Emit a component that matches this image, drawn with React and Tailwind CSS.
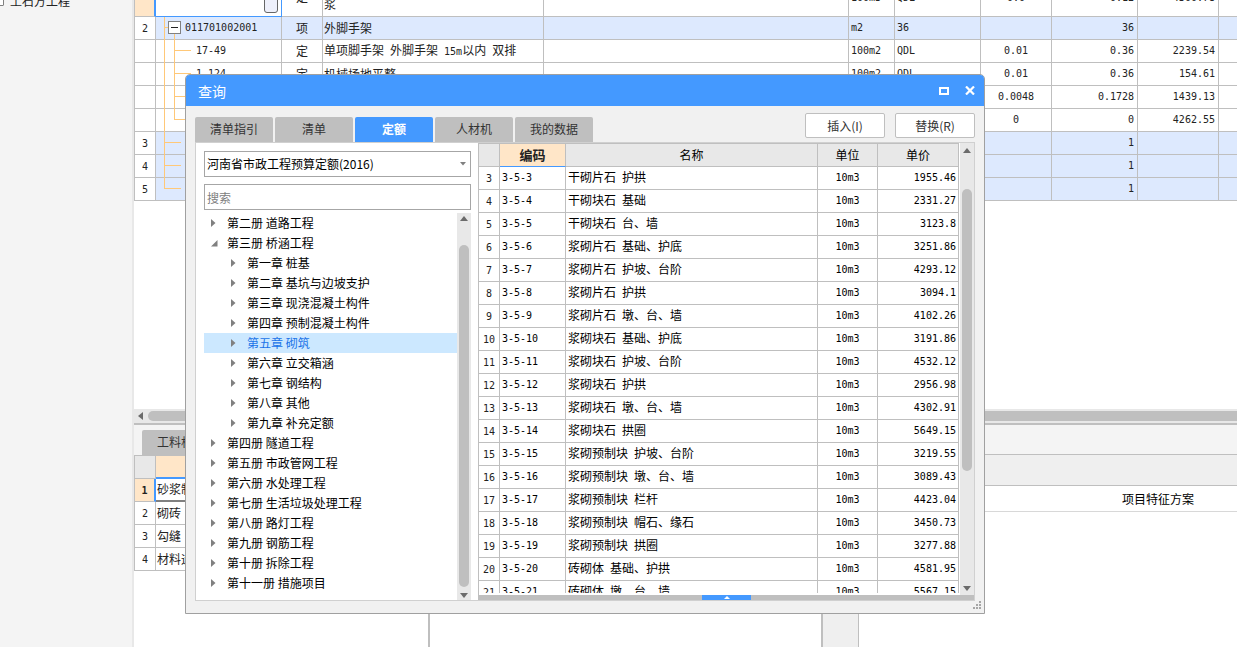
import React from "react";

const MONO = "font-['DejaVu_Sans_Mono','Noto_Sans_CJK_SC',monospace] text-[10px]";

// Latin runs are set in a half-width face, CJK runs keep the full 12px square.
function Mixed({ children }) {
  return String(children)
    .split(/([\x20-\x7e]+)/)
    .filter(Boolean)
    .map((part, i) =>
      /^[\x20-\x7e]/.test(part) ? (
        <span key={i} className={`${MONO} whitespace-pre`}>
          {part}
        </span>
      ) : (
        <span key={i}>{part}</span>
      )
    );
}

const line = "border-[#bfbfbf]";

const budgetRows = [
  { no: "2", code: "011701002001", kind: "项", name: "外脚手架", unit: "m2", expr: "36", rate: "", qty: "36", price: "", node: "root", tint: true },
  { no: "", code: "17-49", kind: "定", name: "单项脚手架 外脚手架 15m以内 双排", unit: "100m2", expr: "QDL", rate: "0.01", qty: "0.36", price: "2239.54", node: "child" },
  { no: "", code: "1-124", kind: "定", name: "机械场地平整", unit: "100m2", expr: "QDL", rate: "0.01", qty: "0.36", price: "154.61", node: "child" },
  { no: "", code: "", kind: "", name: "", unit: "", expr: "", rate: "0.0048", qty: "0.1728", price: "1439.13", node: "child" },
  { no: "", code: "", kind: "", name: "", unit: "", expr: "", rate: "0", qty: "0", price: "4262.55", node: "lastChild" },
  { no: "3", code: "", kind: "", name: "", unit: "", expr: "", rate: "", qty: "1", price: "", node: "leaf", tint: true },
  { no: "4", code: "", kind: "", name: "", unit: "", expr: "", rate: "", qty: "1", price: "", node: "leaf", tint: true },
  { no: "5", code: "", kind: "", name: "", unit: "", expr: "", rate: "", qty: "1", price: "", node: "lastLeaf", tint: true },
];

const nodePaths = {
  root: "M8.5 0V23M8 10.5H12M18.5 17V23",
  child: "M8.5 0V23M18.5 0V23M18 10.5H35",
  lastChild: "M8.5 0V23M18.5 0V11M18 10.5H35",
  leaf: "M8.5 0V23M8 10.5H25",
  lastLeaf: "M8.5 0V11M8 10.5H25",
};

function Branch({ node }) {
  return (
    <svg width="40" height="23" className="-mb-px block shrink-0" aria-hidden="true">
      <path d={nodePaths[node]} stroke="#ffc878" fill="none" />
      {node === "root" && (
        <>
          <rect x="12.5" y="4.5" width="12" height="12" fill="#fff" stroke="#808080" />
          <path d="M15 10.5H22" stroke="#222" />
        </>
      )}
    </svg>
  );
}

function BudgetGrid() {
  const base = `border-b ${line} p-0 h-[23px] overflow-hidden whitespace-nowrap`;
  const plain = `${base} border-r`;
  const text = `${plain} pb-[2px]`;
  const mono = `${plain} pb-[4px]`;
  return (
    <div className="h-[409px] shrink-0 overflow-hidden">
      <table className="-mt-[23px] w-full min-w-[1103px] table-fixed border-separate border-spacing-0 leading-[15px] text-[#222]">
        <colgroup>
          <col className="w-[22px]" />
          <col className="w-[126px]" />
          <col className="w-[41px]" />
          <col className="w-[221px]" />
          <col className="w-[305px]" />
          <col className="w-[46px]" />
          <col className="w-[86px]" />
          <col className="w-[71px]" />
          <col className="w-[86px]" />
          <col className="w-[81px]" />
          <col />
        </colgroup>
        <tbody>
          <tr>
            <td className="h-[40px] border-r-2 border-b border-l border-r-[#4499ff] border-b-[#bfbfbf] border-l-[#bfbfbf] bg-[#ffe6c8] p-0" />
            <td className="border-r border-b border-[#4499ff] bg-white p-0 pr-[3px]">
              <button type="button" aria-label="选择" className="ml-auto block h-[32px] w-[14px] rounded-[3px] border border-[#666] bg-[#eef0fb]" />
            </td>
            <td className={`${plain} text-center`}>定</td>
            <td className={`${text} pl-px`}>
              砌体抹灰
              <br />
              浆
            </td>
            <td className={plain} />
            <td className={`${plain} pl-[2px]`}><Mixed>100m3</Mixed></td>
            <td className={`${plain} pl-[2px]`}><Mixed>QDL</Mixed></td>
            <td className={`${plain} text-center`}><Mixed>0.0</Mixed></td>
            <td className={`${plain} pr-[3px] text-right`}><Mixed>0.12</Mixed></td>
            <td className={`${plain} pr-[3px] text-right`}><Mixed>4300.78</Mixed></td>
            <td className={base} />
          </tr>
          {budgetRows.map((r, i) => (
            <tr key={i} className={r.tint ? "bg-[#dde9fe]" : "bg-white"}>
              <td className={`${text} border-l bg-white text-center`}><Mixed>{r.no}</Mixed></td>
              <td className={`${plain} overflow-visible`}>
                <div className="flex h-[22px] items-center">
                  <Branch node={r.node} />
                  <span className={r.node === "root" ? "-ml-[11px] pb-[3px]" : "pb-[3px]"}><Mixed>{r.code}</Mixed></span>
                </div>
              </td>
              <td className={`${text} text-center`}>{r.kind}</td>
              <td className={`${text} pl-px`}><Mixed>{r.name}</Mixed></td>
              <td className={plain} />
              <td className={`${mono} pl-[2px]`}><Mixed>{r.unit}</Mixed></td>
              <td className={`${mono} pl-[2px]`}><Mixed>{r.expr}</Mixed></td>
              <td className={`${mono} text-center`}><Mixed>{r.rate}</Mixed></td>
              <td className={`${mono} pr-[3px] text-right`}><Mixed>{r.qty}</Mixed></td>
              <td className={`${mono} pr-[3px] text-right`}><Mixed>{r.price}</Mixed></td>
              <td className={base} />
            </tr>
          ))}
        </tbody>
      </table>
    </div>
  );
}

const workItems = ["砂浆制作", "砌砖", "勾缝", "材料运输"];

function LowerPanes() {
  return (
    <div className="flex min-h-0 flex-1 bg-white">
      <section className="flex w-[296px] shrink-0 flex-col border-r-2 border-[#bfbfbf]">
        <div className="flex h-[30px] items-end bg-[#f4f4f4] pl-2">
          <button type="button" className="h-[25px] rounded-t-[2px] bg-[#bfbfbf] px-[15px] pb-[2px] text-[#333]">工料机显示</button>
        </div>
        <table className={`w-full table-fixed border-separate border-spacing-0 border-t ${line} leading-[15px] text-[#222]`}>
          <colgroup>
            <col className="w-[22px]" />
            <col />
          </colgroup>
          <thead>
            <tr>
              <th className={`h-[23px] border-x border-b ${line} bg-[#e8e8e8] p-0`} />
              <th className="border-b-2 border-[#4499ff] bg-[#ffe6c8] p-0" />
            </tr>
          </thead>
          <tbody>
            {workItems.map((w, i) => (
              <tr key={w}>
                <td className={i === 0 ? "h-[23px] border-r-2 border-b border-l border-[#bfbfbf] border-r-[#4499ff] bg-[#ffe6c8] p-0 pb-[2px] text-center font-bold" : `h-[23px] border-x border-b ${line} p-0 pb-[2px] text-center`}>
                  <Mixed>{i + 1}</Mixed>
                </td>
                <td className={i === 0 ? "border-b-2 border-[#808080] p-0 pb-[2px] pl-px" : `border-b ${line} p-0 pb-[2px] pl-px`}>{w}</td>
              </tr>
            ))}
          </tbody>
        </table>
      </section>
      <section className="min-w-[391px] shrink-0 bg-white" />
      <div className={`w-[38px] shrink-0 border-r border-l-2 ${line} bg-[#efefef]`} />
      <section className="min-w-0 flex-1 overflow-hidden">
        <div className={`h-[30px] border-b ${line} bg-[#f4f4f4]`} />
        <div className={`h-[31px] border-b ${line} bg-[#efefef]`} />
        <div className="flex h-[26px] items-center border-b border-[#d8d8d8]">
          <span className="w-[357px] shrink-0 pl-[263px] whitespace-nowrap text-black">项目特征方案</span>
        </div>
      </section>
    </div>
  );
}

const tree = [
  ["第二册 道路工程", 1],
  ["第三册 桥涵工程", 1, "open"],
  ["第一章 桩基", 2],
  ["第二章 基坑与边坡支护", 2],
  ["第三章 现浇混凝土构件", 2],
  ["第四章 预制混凝土构件", 2],
  ["第五章 砌筑", 2, "selected"],
  ["第六章 立交箱涵", 2],
  ["第七章 钢结构", 2],
  ["第八章 其他", 2],
  ["第九章 补充定额", 2],
  ["第四册 隧道工程", 1],
  ["第五册 市政管网工程", 1],
  ["第六册 水处理工程", 1],
  ["第七册 生活垃圾处理工程", 1],
  ["第八册 路灯工程", 1],
  ["第九册 钢筋工程", 1],
  ["第十册 拆除工程", 1],
  ["第十一册 措施项目", 1],
];

function TreeArrow({ open }) {
  return (
    <svg width="16" height="8" className="shrink-0" aria-hidden="true" fill="#808080">
      {open ? <path d="M0 7.500L6.500 1V7.500Z" /> : <path d="M0 0L4.500 4L0 8Z" />}
    </svg>
  );
}

function ScrollArrow({ down }) {
  return (
    <svg width="8" height="5" aria-hidden="true" fill="#6b6b6b" className="block">
      {down ? <path d="M0 0H8L4 5Z" /> : <path d="M0 5H8L4 0Z" />}
    </svg>
  );
}

const quotas = [
  ["3", "3-5-3", "干砌片石 护拱", "1955.46"],
  ["4", "3-5-4", "干砌块石 基础", "2331.27"],
  ["5", "3-5-5", "干砌块石 台、墙", "3123.8"],
  ["6", "3-5-6", "浆砌片石 基础、护底", "3251.86"],
  ["7", "3-5-7", "浆砌片石 护坡、台阶", "4293.12"],
  ["8", "3-5-8", "浆砌片石 护拱", "3094.1"],
  ["9", "3-5-9", "浆砌片石 墩、台、墙", "4102.26"],
  ["10", "3-5-10", "浆砌块石 基础、护底", "3191.86"],
  ["11", "3-5-11", "浆砌块石 护坡、台阶", "4532.12"],
  ["12", "3-5-12", "浆砌块石 护拱", "2956.98"],
  ["13", "3-5-13", "浆砌块石 墩、台、墙", "4302.91"],
  ["14", "3-5-14", "浆砌块石 拱圈", "5649.15"],
  ["15", "3-5-15", "浆砌预制块 护坡、台阶", "3219.55"],
  ["16", "3-5-16", "浆砌预制块 墩、台、墙", "3089.43"],
  ["17", "3-5-17", "浆砌预制块 栏杆", "4423.04"],
  ["18", "3-5-18", "浆砌预制块 帽石、缘石", "3450.73"],
  ["19", "3-5-19", "浆砌预制块 拱圈", "3277.88"],
  ["20", "3-5-20", "砖砌体 基础、护拱", "4581.95"],
  ["21", "3-5-21", "砖砌体 墩、台、墙", "5567.15"],
];

function QuotaTable() {
  const cell = `h-[23px] border-r border-b ${line} p-0 whitespace-nowrap overflow-hidden`;
  const text = `${cell} pb-[2px]`;
  const mono = `${cell} pb-[4px]`;
  const head = `${text} bg-[#e8e8e8] font-normal`;
  return (
    <div className={`h-[450px] overflow-hidden border-t ${line}`}>
      <table className="w-full table-fixed border-separate border-spacing-0 leading-[15px] text-black">
        <colgroup>
          <col className="w-[21px]" />
          <col className="w-[66px]" />
          <col />
          <col className="w-[60px]" />
          <col className="w-[81px]" />
        </colgroup>
        <thead>
          <tr>
            <th className={head} />
            <th className="h-[23px] border-r border-b border-r-[#bfbfbf] border-b-[#4499ff] bg-[#ffe6c8] p-0 pb-[2px] text-[13px] font-bold text-[#222]">编码</th>
            <th className={head}>名称</th>
            <th className={head}>单位</th>
            <th className={head}>单价</th>
          </tr>
        </thead>
        <tbody>
          {quotas.map(([no, code, name, price]) => (
            <tr key={no}>
              <td className={`${text} text-center text-[#222]`}><Mixed>{no}</Mixed></td>
              <td className={`${mono} pl-[2px]`}><Mixed>{code}</Mixed></td>
              <td className={`${text} pl-[2px]`}><Mixed>{name}</Mixed></td>
              <td className={`${mono} text-center`}><Mixed>10m3</Mixed></td>
              <td className={`${mono} pr-[2px] text-right`}><Mixed>{price}</Mixed></td>
            </tr>
          ))}
        </tbody>
      </table>
    </div>
  );
}

const tabs = ["清单指引", "清单", "定额", "人材机", "我的数据"];

function QueryDialog() {
  return (
    <div role="dialog" aria-labelledby="query-title" className="absolute top-[74px] left-[185px] flex h-[540px] w-[800px] flex-col overflow-hidden rounded-t-[5px] border border-[#a0a0a0] bg-[#f1f1f1]">
      <header className="flex h-[31px] shrink-0 items-center bg-[#4499ff] pr-[9px] pl-3 text-white">
        <h1 id="query-title" className="flex-1 text-[14px] leading-[20px]">查询</h1>
        <button type="button" aria-label="最大化" className="mr-4">
          <svg width="10" height="8" className="block"><path d="M1 1H9V7H1Z" fill="none" stroke="#fff" strokeWidth="2" /></svg>
        </button>
        <button type="button" aria-label="关闭">
          <svg width="10" height="9" className="block"><path d="M1 0.500L9 8.500M9 0.500L1 8.500" fill="none" stroke="#fff" strokeWidth="2.200" /></svg>
        </button>
      </header>
      <div className="flex h-[36px] shrink-0 items-end px-[9px]">
        <div role="tablist" className="flex flex-1 gap-[2px]">
          {tabs.map((t) => (
            <button
              key={t}
              type="button"
              role="tab"
              aria-selected={t === "定额"}
              className={t === "定额" ? "h-[25px] w-[78px] rounded-t-[2px] bg-[#4499ff] pb-[2px] font-bold text-white" : "h-[25px] w-[78px] rounded-t-[2px] bg-[#bfbfbf] pb-[2px] text-[#333]"}
            >
              {t}
            </button>
          ))}
        </div>
        <div className="flex gap-[10px] pb-1">
          <button type="button" className={`h-[25px] w-[80px] rounded-[2px] border ${line} bg-white text-[#333]`}>插入(I)</button>
          <button type="button" className={`h-[25px] w-[80px] rounded-[2px] border ${line} bg-white text-[#333]`}>替换(R)</button>
        </div>
      </div>
      <div className="mx-[9px] mb-3 flex min-h-0 flex-1 border border-[#d0d0d0] bg-white text-black">
        <div className="flex w-[282px] shrink-0 flex-col pt-2 pr-[7px] pl-2">
          <div className="relative">
            <select aria-label="定额库" className="block h-[26px] w-full appearance-none border border-[#a6a6a6] bg-white pl-[2px] leading-[20px]">
              <option>河南省市政工程预算定额(2016)</option>
            </select>
            <svg width="6" height="4" className="pointer-events-none absolute top-[11px] right-[5px]" fill="#808080"><path d="M0 0H6L3 3.500Z" /></svg>
          </div>
          <input type="search" aria-label="搜索" placeholder="搜索" className="mt-[7px] block h-[26px] w-full border border-[#a6a6a6] bg-white pl-[2px] placeholder:text-[#808080]" />
          <div className="mt-[3px] flex min-h-0 flex-1">
            <ul role="tree" className="min-w-0 flex-1 overflow-hidden">
              {tree.map(([label, level, state]) => (
                <li
                  key={label}
                  role="treeitem"
                  aria-level={level}
                  aria-expanded={state === "open"}
                  aria-selected={state === "selected"}
                  className={`flex h-[20px] items-center leading-[20px] ${level === 1 ? "pl-[7px]" : "pl-[27px]"} ${state === "selected" ? "bg-[#cce8ff] text-[#1a73e8]" : ""}`}
                >
                  <TreeArrow open={state === "open"} />
                  {label}
                </li>
              ))}
            </ul>
            <div className="flex w-[14px] flex-col items-center justify-between bg-[#e8e8e8] pt-[3px] pb-[2px]">
              <ScrollArrow />
              <div className="mt-6 mb-[6px] w-[10px] flex-1 rounded-full bg-[#bfbfbf]" />
              <ScrollArrow down />
            </div>
          </div>
        </div>
        <div className={`flex min-w-0 flex-1 flex-col border-l ${line}`}>
          <div className="flex min-h-0 flex-1">
            <div className="min-w-0 flex-1 pr-px">
              <QuotaTable />
            </div>
            <div className="flex w-[14px] shrink-0 flex-col items-center bg-[#e8e8e8] pt-[5px] pb-[4px]">
              <ScrollArrow />
              <div className="mt-9 h-[282px] w-[10px] rounded-full bg-[#bfbfbf]" />
              <div className="flex-1" />
              <ScrollArrow down />
            </div>
          </div>
          <div className="flex h-[5px] shrink-0 justify-center bg-[#bfbfbf]">
            <button type="button" aria-label="展开" className="flex w-[49px] items-center justify-center bg-[#4499ff]">
              <svg width="6" height="3" fill="#fff"><path d="M0 3L3 0L6 3Z" /></svg>
            </button>
          </div>
        </div>
      </div>
      <svg width="8" height="8" className="absolute right-[3px] bottom-[4px]" fill="#a6a6a6" aria-hidden="true">
        <path d="M6 0h2v2h-2zM3 3h2v2h-2zM6 3h2v2h-2zM0 6h2v2h-2zM3 6h2v2h-2zM6 6h2v2h-2z" />
      </svg>
    </div>
  );
}

export default function App() {
  return (
    <div className="relative flex h-screen overflow-hidden bg-white font-['Noto_Sans_CJK_SC',sans-serif] text-[12px] leading-[15px]">
      <aside className="w-[134px] shrink-0 overflow-hidden border-r-2 border-[#e8e8e8] bg-[#f4f4f4]">
        <div className="-mt-[10px] flex h-[20px] items-center text-[#222]">
          <span className="-ml-[8px] h-[12px] w-[12px] shrink-0 rounded-[1px] border border-[#808080] bg-white" />
          <span className="pl-[6px]">土石方工程</span>
        </div>
      </aside>
      <main className="flex min-w-0 flex-1 flex-col overflow-hidden">
        <BudgetGrid />
        <div className="flex h-[14px] shrink-0 items-center bg-[#e8e8e8] pl-1">
          <svg width="5" height="8" fill="#6b6b6b" className="shrink-0"><path d="M5 0V8L0 4Z" /></svg>
          <div className="ml-[5px] h-[10px] flex-1 rounded-l-full bg-[#bfbfbf]" />
        </div>
        <div className="h-[2px] shrink-0 bg-[#bfbfbf]" />
        <LowerPanes />
      </main>
      <QueryDialog />
    </div>
  );
}
